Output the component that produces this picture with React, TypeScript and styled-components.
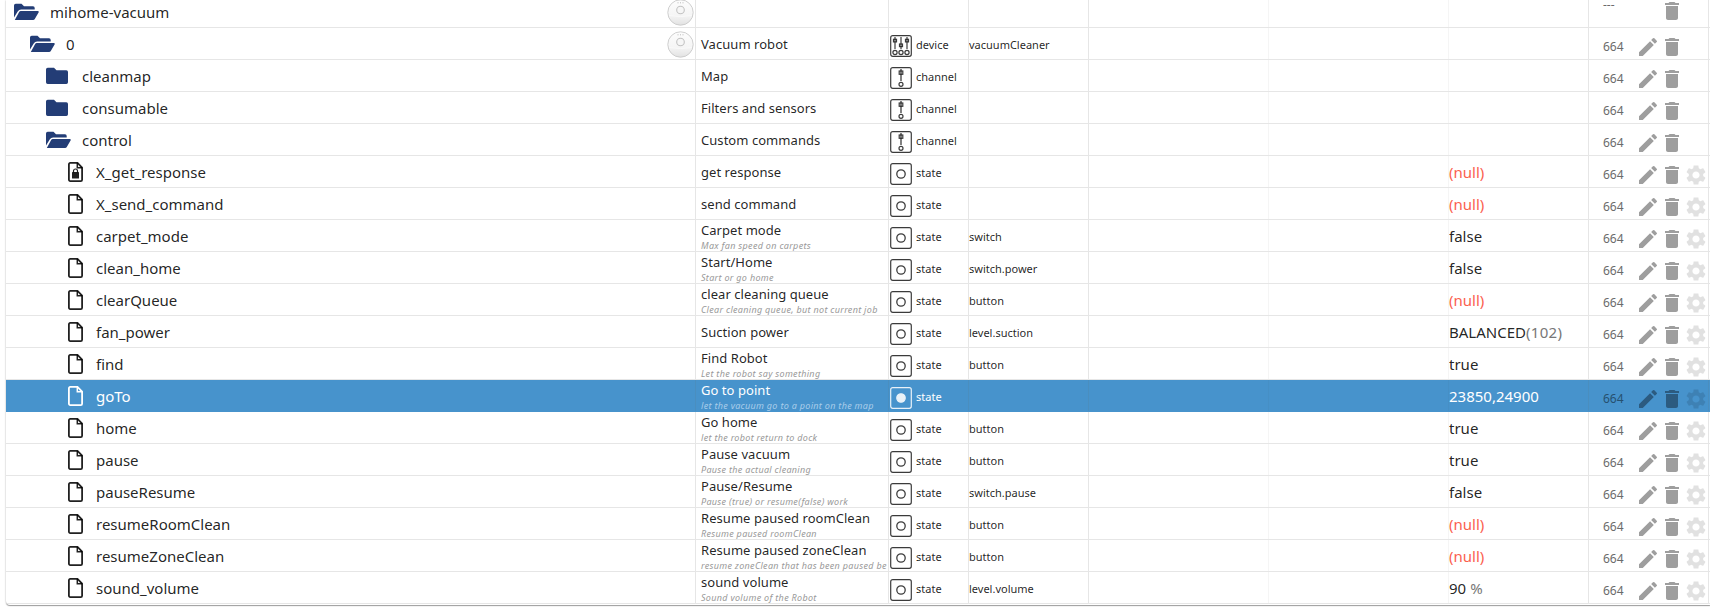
import React from 'react';
import styled, { createGlobalStyle } from 'styled-components';

const Global = createGlobalStyle`
  html, body { margin: 0; background: #fff; overflow: hidden; }
  * { box-sizing: border-box; }
`;

const Page = styled.div`
  height: 612px;
  padding-left: 6px;
  overflow: hidden;
  font-family: 'Noto Sans', sans-serif;
  color: rgba(0, 0, 0, 0.87);
`;

const Panel = styled.div`
  height: 605px;
  border-radius: 0 0 0 4px;
  overflow: hidden;
  background: #fff;
  box-shadow: 0 1px 1px rgba(0, 0, 0, 0.35), 0 0 2px rgba(0, 0, 0, 0.22);
`;

const Rows = styled.div`
  margin-top: -4px;
`;

const Row = styled.div<{ $selected: boolean }>`
  display: grid;
  grid-template-columns: 690px 193px 80px 120px 180px 180px 140px 120px 1px;
  height: 32px;
  border-bottom: 1px solid ${p => (p.$selected ? '#4793cc' : '#e6e6e6')};
  background: ${p => (p.$selected ? '#4793cc' : 'transparent')};
  color: ${p => (p.$selected ? '#fff' : 'inherit')};
`;

const Cell = styled.div<{ $line: string }>`
  display: flex;
  align-items: center;
  min-width: 0;
  overflow: hidden;
  white-space: nowrap;
  border-right: 1px solid ${p => p.$line};
`;

const IdCell = styled(Cell)<{ $indent: number }>`
  padding-left: ${p => p.$indent}px;
`;

const FolderBox = styled.span`
  display: flex;
  width: 36px;
  color: #233d76;
`;

const FileBox = styled.span`
  display: flex;
  width: 28px;
`;

const Name = styled.span`
  flex: 1;
  font-size: 15px;
  line-height: 20px;
`;

const NameCell = styled(Cell)<{ $described: boolean }>`
  flex-direction: column;
  align-items: flex-start;
  justify-content: ${p => (p.$described ? 'flex-start' : 'center')};
  padding: ${p => (p.$described ? 0 : 1)}px 0 0 5px;
`;

const Title = styled.span`
  font-size: 13px;
  line-height: 20px;
  letter-spacing: 0.05px;
`;

const Desc = styled.span<{ $selected: boolean }>`
  font-size: 9px;
  font-style: italic;
  line-height: 11px;
  letter-spacing: 0.31px;
  color: ${p => (p.$selected ? '#a9cdea' : '#999')};
`;

const TypeCell = styled(Cell)`
  padding: 1px 0 0 1px;
  gap: 4px;
  font-size: 11px;
`;

const IconDown = styled.span`
  display: flex;
  padding-top: 3px;
`;

const RoleCell = styled(Cell)`
  padding-top: 1px;
  font-size: 11px;
`;

const ValueCell = styled(Cell)<{ $empty: boolean }>`
  font-size: 15px;
  color: ${p => (p.$empty ? '#fb5f4f' : 'inherit')};
`;

const Muted = styled.span`
  white-space: pre;
  letter-spacing: 0.3px;
  color: #777;
`;

const Actions = styled(Cell)<{ $selected: boolean; $root: boolean }>`
  padding: ${p => (p.$root ? '0 0 2px 14px' : '6px 0 0 14px')};
  color: ${p => (p.$selected ? '#2c5b80' : '#9e9e9e')};
`;

const Rights = styled.span<{ $selected: boolean; $root: boolean }>`
  width: 33px;
  padding-bottom: ${p => (p.$root ? 11 : 0)}px;
  font-size: 12px;
  line-height: ${p => (p.$root ? 8 : 16)}px;
  color: ${p => (p.$selected ? '#26506f' : '#6b6b6b')};
`;

const Slot = styled.span<{ $faint?: boolean }>`
  display: flex;
  width: 24px;
  opacity: ${p => (p.$faint ? 0.3 : 1)};
`;

const MdIcon = ({ d }: { d: string }) => (
  <svg width="24" height="24" viewBox="0 0 24 24" fill="currentColor"><path d={d} /></svg>
);

const PENCIL = 'M3 17.25V21h3.75L17.81 9.94l-3.75-3.75L3 17.25zM20.71 7.04a1 1 0 0 0 0-1.41l-2.34-2.34a1 1 0 0 0-1.41 0l-1.83 1.83 3.75 3.75 1.83-1.83z';
const TRASH = 'M6 19c0 1.1.9 2 2 2h8c1.1 0 2-.9 2-2V7H6v12zM19 4h-3.5l-1-1h-5l-1 1H5v2h14V4z';
const GEAR = 'M19.14 12.94c.04-.3.06-.61.06-.94 0-.32-.02-.64-.07-.94l2.03-1.58c.18-.14.23-.41.12-.61l-1.92-3.32c-.12-.22-.37-.29-.59-.22l-2.39.96c-.5-.38-1.03-.7-1.62-.94l-.36-2.54c-.04-.24-.24-.41-.48-.41h-3.84c-.24 0-.43.17-.47.41l-.36 2.54c-.59.24-1.13.57-1.62.94l-2.39-.96c-.22-.08-.47 0-.59.22L2.74 8.87c-.12.21-.08.47.12.61l2.03 1.58c-.05.3-.09.63-.09.94s.02.64.07.94l-2.03 1.58c-.18.14-.23.41-.12.61l1.92 3.32c.12.22.37.29.59.22l2.39-.96c.5.38 1.03.7 1.62.94l.36 2.54c.05.24.24.41.48.41h3.84c.24 0 .44-.17.47-.41l.36-2.54c.59-.24 1.13-.56 1.62-.94l2.39.96c.22.08.47 0 .59-.22l1.92-3.32c.12-.22.07-.47-.12-.61l-2.01-1.58zM12 15.6c-1.98 0-3.6-1.62-3.6-3.6s1.62-3.6 3.6-3.6 3.6 1.62 3.6 3.6-1.62 3.6-3.6 3.6z';

const FolderOpen = () => (
  <svg width="26" height="18" viewBox="0 0 26 18" fill="currentColor">
    <path d="M0 14.5V2.5A1.7 1.7 0 0 1 1.7.8H7.5L10 3.3h9A1.7 1.7 0 0 1 20.7 5V6.5H7.2A4 4 0 0 0 3.7 8.5z" />
    <path d="M.8 17 5 9.3A2.2 2.2 0 0 1 6.9 8H24a.8.8 0 0 1 .7 1.2L20.8 16A2 2 0 0 1 19 17z" />
  </svg>
);

const FolderClosed = () => (
  <svg width="22" height="18" viewBox="0 0 22 18" fill="currentColor">
    <path d="M0 15.3V2.5A1.7 1.7 0 0 1 1.7.8H8L10.5 3.3H20.3A1.7 1.7 0 0 1 22 5V15.3A1.7 1.7 0 0 1 20.3 17H1.7A1.7 1.7 0 0 1 0 15.3z" />
  </svg>
);

const FileGlyph = ({ locked }: { locked: boolean }) => (
  <svg width="15" height="20" viewBox="0 0 15 20" fill="none" stroke="currentColor" strokeWidth="1.8">
    <path d="M9.5.9H2.2A1.3 1.3 0 0 0 .9 2.2v15.6a1.3 1.3 0 0 0 1.3 1.3h10.6a1.3 1.3 0 0 0 1.3-1.3V5.5z" />
    <path d="M9.3 1v4.7H14" strokeWidth="1.5" />
    {locked && <rect x="4" y="10" width="7" height="6.5" rx=".6" fill="currentColor" stroke="none" />}
    {locked && <path d="M5.5 10.5V9a2 2 0 0 1 4 0v1.5" strokeWidth="1.2" />}
  </svg>
);

const TypeGlyph = ({ type, selected }: { type: string; selected: boolean }) => (
  <svg width="22" height="22" viewBox="0 0 22 22" fill="none" stroke="currentColor" strokeWidth="1.2" opacity=".88">
    <rect x=".7" y=".7" width="20.6" height="20.6" rx="2" />
    {type === 'state' && <circle cx="11" cy="11" r="4.2" strokeWidth="1.3" fill={selected ? 'currentColor' : 'none'} />}
    {type === 'channel' && <><path d="M11 2v12" strokeWidth="1.3" /><rect x="9.2" y="4" width="3.6" height="3.3" /><circle cx="11" cy="17.3" r="2" /></>}
    {type === 'device' && [[5, 4.3], [11, 9], [17, 4.3]].map(([x, y]) => (
      <g key={x}><path d={`M${x} 2v12`} /><rect x={x - 1.5} y={y} width="3" height="2.6" /><circle cx={x} cy="17.5" r="2.1" /></g>
    ))}
  </svg>
);

const RobotBox = styled.span`
  display: flex;
  width: 27px;
  margin-right: 1px;
  padding-top: 2px;
`;

const Robot = () => (
  <RobotBox>
    <svg width="27" height="27" viewBox="0 0 27 27">
      <defs><linearGradient id="shell" x1="0" y1="0" x2="0" y2="1"><stop offset="0" stopColor="#fdfdfd" /><stop offset=".6" stopColor="#f5f5f5" /><stop offset="1" stopColor="#e2e2e2" /></linearGradient></defs>
      <circle cx="13.5" cy="13.5" r="12.7" fill="url(#shell)" stroke="#c9c9c9" strokeWidth=".9" />
      <path d="M2 16.5q11.5 2 23 0" fill="none" stroke="#fafafa" />
      <circle cx="13.5" cy="11" r="3.8" fill="#f6f6f6" stroke="#c2c2c2" strokeWidth="1.1" />
      <path d="M10.5 3.8h1M13 3.8h1M15.5 3.8h1" stroke="#bbb" />
    </svg>
  </RobotBox>
);

type Item = {
  id: string; kind: 'open' | 'closed' | 'file' | 'locked'; indent: number;
  name?: string; desc?: string; type?: string; role?: string; value?: string; suffix?: string;
  robot?: boolean; selected?: boolean;
};

const items: Item[] = [
  { id: 'mihome-vacuum', kind: 'open', indent: 8, robot: true },
  { id: '0', kind: 'open', indent: 24, robot: true, name: 'Vacuum robot', type: 'device', role: 'vacuumCleaner' },
  { id: 'cleanmap', kind: 'closed', indent: 40, name: 'Map', type: 'channel' },
  { id: 'consumable', kind: 'closed', indent: 40, name: 'Filters and sensors', type: 'channel' },
  { id: 'control', kind: 'open', indent: 40, name: 'Custom commands', type: 'channel' },
  { id: 'X_get_response', kind: 'locked', indent: 62, name: 'get response', type: 'state', value: '(null)' },
  { id: 'X_send_command', kind: 'file', indent: 62, name: 'send command', type: 'state', value: '(null)' },
  { id: 'carpet_mode', kind: 'file', indent: 62, name: 'Carpet mode', desc: 'Max fan speed on carpets', type: 'state', role: 'switch', value: 'false' },
  { id: 'clean_home', kind: 'file', indent: 62, name: 'Start/Home', desc: 'Start or go home', type: 'state', role: 'switch.power', value: 'false' },
  { id: 'clearQueue', kind: 'file', indent: 62, name: 'clear cleaning queue', desc: 'Clear cleaning queue, but not current job', type: 'state', role: 'button', value: '(null)' },
  { id: 'fan_power', kind: 'file', indent: 62, name: 'Suction power', type: 'state', role: 'level.suction', value: 'BALANCED', suffix: '(102)' },
  { id: 'find', kind: 'file', indent: 62, name: 'Find Robot', desc: 'Let the robot say something', type: 'state', role: 'button', value: 'true' },
  { id: 'goTo', kind: 'file', indent: 62, name: 'Go to point', desc: 'let the vacuum go to a point on the map', type: 'state', value: '23850,24900', selected: true },
  { id: 'home', kind: 'file', indent: 62, name: 'Go home', desc: 'let the robot return to dock', type: 'state', role: 'button', value: 'true' },
  { id: 'pause', kind: 'file', indent: 62, name: 'Pause vacuum', desc: 'Pause the actual cleaning', type: 'state', role: 'button', value: 'true' },
  { id: 'pauseResume', kind: 'file', indent: 62, name: 'Pause/Resume', desc: 'Pause (true) or resume(false) work', type: 'state', role: 'switch.pause', value: 'false' },
  { id: 'resumeRoomClean', kind: 'file', indent: 62, name: 'Resume paused roomClean', desc: 'Resume paused roomClean', type: 'state', role: 'button', value: '(null)' },
  { id: 'resumeZoneClean', kind: 'file', indent: 62, name: 'Resume paused zoneClean', desc: 'resume zoneClean that has been paused be', type: 'state', role: 'button', value: '(null)' },
  { id: 'sound_volume', kind: 'file', indent: 62, name: 'sound volume', desc: 'Sound volume of the Robot', type: 'state', role: 'level.volume', value: '90', suffix: ' %' },
];

const ObjectRow = ({ item }: { item: Item }) => {
  const sel = !!item.selected;
  const isFile = item.kind === 'file' || item.kind === 'locked';
  const faint = sel ? '#468fc5' : '#f5f5f5';
  const line = sel ? '#4a8ebf' : '#e6e6e6';
  return (
    <Row $selected={sel}>
      <IdCell $indent={item.indent} $line={line}>
        {isFile
          ? <FileBox><FileGlyph locked={item.kind === 'locked'} /></FileBox>
          : <FolderBox>{item.kind === 'open' ? <FolderOpen /> : <FolderClosed />}</FolderBox>}
        <Name>{item.id}</Name>
        {item.robot && <Robot />}
      </IdCell>
      <NameCell $line={line} $described={!!item.desc}>
        {item.name && <Title>{item.name}</Title>}
        {item.desc && <Desc $selected={sel}>{item.desc}</Desc>}
      </NameCell>
      <TypeCell $line={line}>
        {item.type && <><IconDown><TypeGlyph type={item.type} selected={sel} /></IconDown>{item.type}</>}
      </TypeCell>
      <RoleCell $line={line}>{item.role}</RoleCell>
      <Cell $line={faint} />
      <Cell $line={faint} />
      <ValueCell $line={line} $empty={item.value === '(null)'}>
        {item.value}{item.suffix && <Muted>{item.suffix}</Muted>}
      </ValueCell>
      <Actions $line={line} $selected={sel} $root={!item.type}>
        <Rights $selected={sel} $root={!item.type}>{item.type ? '664' : '---'}</Rights>
        <Slot>{item.type && <MdIcon d={PENCIL} />}</Slot>
        <Slot><MdIcon d={TRASH} /></Slot>
        <Slot $faint>{isFile && <MdIcon d={GEAR} />}</Slot>
      </Actions>
    </Row>
  );
};

export default function App() {
  return (
    <Page>
      <Global />
      <Panel>
        <Rows>{items.map(item => <ObjectRow key={item.id} item={item} />)}</Rows>
      </Panel>
    </Page>
  );
}
